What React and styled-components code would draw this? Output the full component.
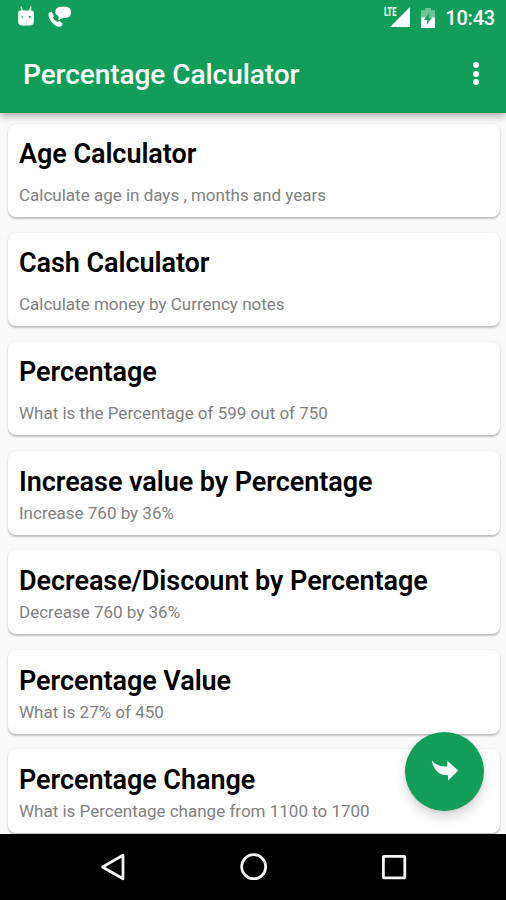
import React from "react";
import styled, { createGlobalStyle } from "styled-components";

const items = [
  { title: "Age Calculator", text: "Calculate age in days , months and years", tall: true },
  { title: "Cash Calculator", text: "Calculate money by Currency notes", tall: true },
  { title: "Percentage", text: "What is the Percentage of 599 out of 750", tall: true },
  { title: "Increase value by Percentage", text: "Increase 760 by 36%" },
  { title: "Decrease/Discount by Percentage", text: "Decrease 760 by 36%" },
  { title: "Percentage Value", text: "What is 27% of 450" },
  { title: "Percentage Change", text: "What is Percentage change from 1100 to 1700" },
];

function App() {
  return (
    <>
      <GlobalStyle />
      <Screen>
        <Header>
          <StatusBar>
            <StatusGroup>
              {/** android head */}
              <svg width="18" height="22" viewBox="0 0 18 22">
                <path d="M4 0.500l1.300 4.500M14 0.500l-1.300 4.500" stroke="#d9f0e3" strokeWidth="1.600" />
                <path d="M3 4.500h12q1.800 0 1.800 2v9q0 4-4 4H5.200q-4 0-4-4v-9q0-2 1.800-2z" fill="#fff" />
                <circle cx="5.300" cy="11" r="1.100" fill="#6fc497" />
                <circle cx="12.700" cy="11" r="1.100" fill="#109d58" />
              </svg>
              {/** phone with message */}
              <svg width="24" height="22" viewBox="0 0 24 22">
                <path
                  d="M0.500 7.200Q2.100 5.700 3.900 6.200L6 10 4.900 11.800q1.600 3 4.400 4.300l2.200-1 3.200 2.700q-.4 2.600-3 2.900Q7.800 21 4 16.800.2 12 .5 7.200z"
                  fill="#fff"
                />
                <path
                  d="M13 0.800H17.500q5.500.3 5.500 5.500t-5 5.600h-3l-4.500 2.100.2-3.900Q7.300 8.800 7.300 6.300 7.300 1.100 13 .8z"
                  fill="#fff"
                />
              </svg>
            </StatusGroup>
            <StatusGroup $right>
              <Signal>
                <Lte>LTE</Lte>
                <svg width="20" height="20" viewBox="0 0 20 20">
                  <path d="M20 0v20H0z" fill="#fff" />
                </svg>
              </Signal>
              <Battery width="14" height="20" viewBox="0 0 14 20">
                <path d="M4 0h6v2.300h4V10H0V2.300h4z" fill="#6fc497" />
                <path d="M0 9.500h14V20H0z" fill="#fff" />
                <path d="M8.500 4.500L3 12h3.500l-1 5L11 9.500H7.500z" fill="#109d58" />
              </Battery>
              <Clock>10:43</Clock>
            </StatusGroup>
          </StatusBar>
          <Toolbar>
            <AppTitle>Percentage Calculator</AppTitle>
            <Menu aria-label="menu">
              <Dot />
              <Dot />
              <Dot />
            </Menu>
          </Toolbar>
        </Header>
        <List>
          {items.map((item) => (
            <Card key={item.title} $tall={item.tall}>
              <CardTitle>{item.title}</CardTitle>
              <CardText>{item.text}</CardText>
            </Card>
          ))}
        </List>
        <Fab aria-label="share">
          <svg width="28" height="24" viewBox="0 0 28 24">
            <path
              d="M.8 1.500C4.500 6 9.500 7.900 16.300 7.400V1.800L27.300 11.500 17 21.800V16.300C8.500 16.500 2.500 11.500.8 1.500z"
              fill="#fff"
            />
          </svg>
        </Fab>
        <NavBar>
          <svg width="26" height="28" viewBox="0 0 26 28">
            <path d="M23 2.200v23.600L2.500 14z" fill="none" stroke="#f4f4f4" strokeWidth="2.800" strokeLinejoin="round" />
          </svg>
          <svg width="28" height="28" viewBox="0 0 28 28">
            <circle cx="13.700" cy="13.700" r="12" fill="none" stroke="#f4f4f4" strokeWidth="2.800" />
          </svg>
          <svg width="26" height="28" viewBox="0 0 26 28">
            <rect x="2.400" y="3.400" width="21.400" height="21.400" rx="0.500" fill="none" stroke="#f4f4f4" strokeWidth="2.800" />
          </svg>
        </NavBar>
      </Screen>
    </>
  );
}

export default App;

const GlobalStyle = createGlobalStyle`
  * {
    box-sizing: border-box;
  }
  body {
    margin: 0;
    font-family: Roboto, "Liberation Sans", sans-serif;
  }
`;
const Screen = styled.div`
  position: relative;
  display: flex;
  flex-direction: column;
  width: 506px;
  height: 900px;
  overflow: hidden;
  background-color: #fafafa;
`;
const Header = styled.header`
  flex: none;
  height: 113px;
  background-color: #119e59;
  box-shadow: 0 3px 8px rgba(0, 0, 0, 0.32);
  border-bottom: 1px solid #0b9650;
  color: white;
  z-index: 1;
`;
const StatusBar = styled.div`
  display: flex;
  justify-content: space-between;
  height: 38px;
  padding: 6px 11px 0 17px;
`;
const StatusGroup = styled.div`
  display: flex;
  align-items: flex-start;
  gap: ${(props) => (props.$right ? "10.500px" : "13px")};
`;
const Signal = styled.div`
  display: flex;
  padding-top: 1px;
`;
const Lte = styled.span`
  width: 6px;
  font-size: 12px;
  font-weight: 700;
  line-height: 11px;
  white-space: nowrap;
  transform: scaleX(0.65);
  transform-origin: left;
`;
const Battery = styled.svg`
  margin-top: 2px;
`;
const Clock = styled.span`
  font-size: 20px;
  font-weight: 500;
  line-height: 24px;
  letter-spacing: -0.200px;
`;
const Toolbar = styled.div`
  display: flex;
  justify-content: space-between;
  align-items: center;
  height: 74px;
  padding: 0 27px 0 23px;
`;
const AppTitle = styled.h1`
  margin: 0;
  font-size: 28px;
  font-weight: 500;
  line-height: 34px;
  letter-spacing: -0.050px;
`;
const Menu = styled.button`
  display: flex;
  flex-direction: column;
  gap: 2.500px;
  padding: 0 0 3px;
  border: none;
  background: none;
`;
const Dot = styled.span`
  width: 6px;
  height: 6px;
  border-radius: 50%;
  background-color: white;
`;
const List = styled.main`
  flex: 1;
  min-height: 0;
  display: flex;
  flex-direction: column;
  gap: 15.600px;
  padding: 10.500px 6px 0 8px;
  overflow: hidden;
`;
const Card = styled.section`
  flex: none;
  display: flex;
  flex-direction: column;
  gap: ${(props) => (props.$tall ? "10px" : "0")};
  height: ${(props) => (props.$tall ? "93.600px" : "83.800px")};
  padding: ${(props) => (props.$tall ? "14.100px" : "14.800px")} 11px 0;
  border-radius: 8px;
  background-color: white;
  box-shadow: 0 2px 2px rgba(0, 0, 0, 0.22), 0 0 2px rgba(0, 0, 0, 0.1);
`;
const CardTitle = styled.h2`
  margin: 0;
  color: black;
  font-size: 27px;
  font-weight: 600;
  line-height: 32px;
  letter-spacing: -0.060px;
  white-space: nowrap;
`;
const CardText = styled.p`
  margin: 0;
  color: #808080;
  font-size: 17px;
  line-height: 31px;
  white-space: nowrap;
`;
const Fab = styled.button`
  position: absolute;
  right: 22px;
  bottom: 89.500px;
  display: flex;
  justify-content: center;
  align-items: center;
  width: 79px;
  height: 79px;
  padding: 0;
  border: none;
  border-radius: 50%;
  background-color: #119e59;
  box-shadow: 0 7px 12px rgba(0, 0, 0, 0.15), 0 1px 4px rgba(0, 0, 0, 0.08);
`;
const NavBar = styled.nav`
  flex: none;
  display: flex;
  justify-content: space-between;
  align-items: center;
  height: 66px;
  padding: 0 99px 0 100px;
  background-color: black;
`;
